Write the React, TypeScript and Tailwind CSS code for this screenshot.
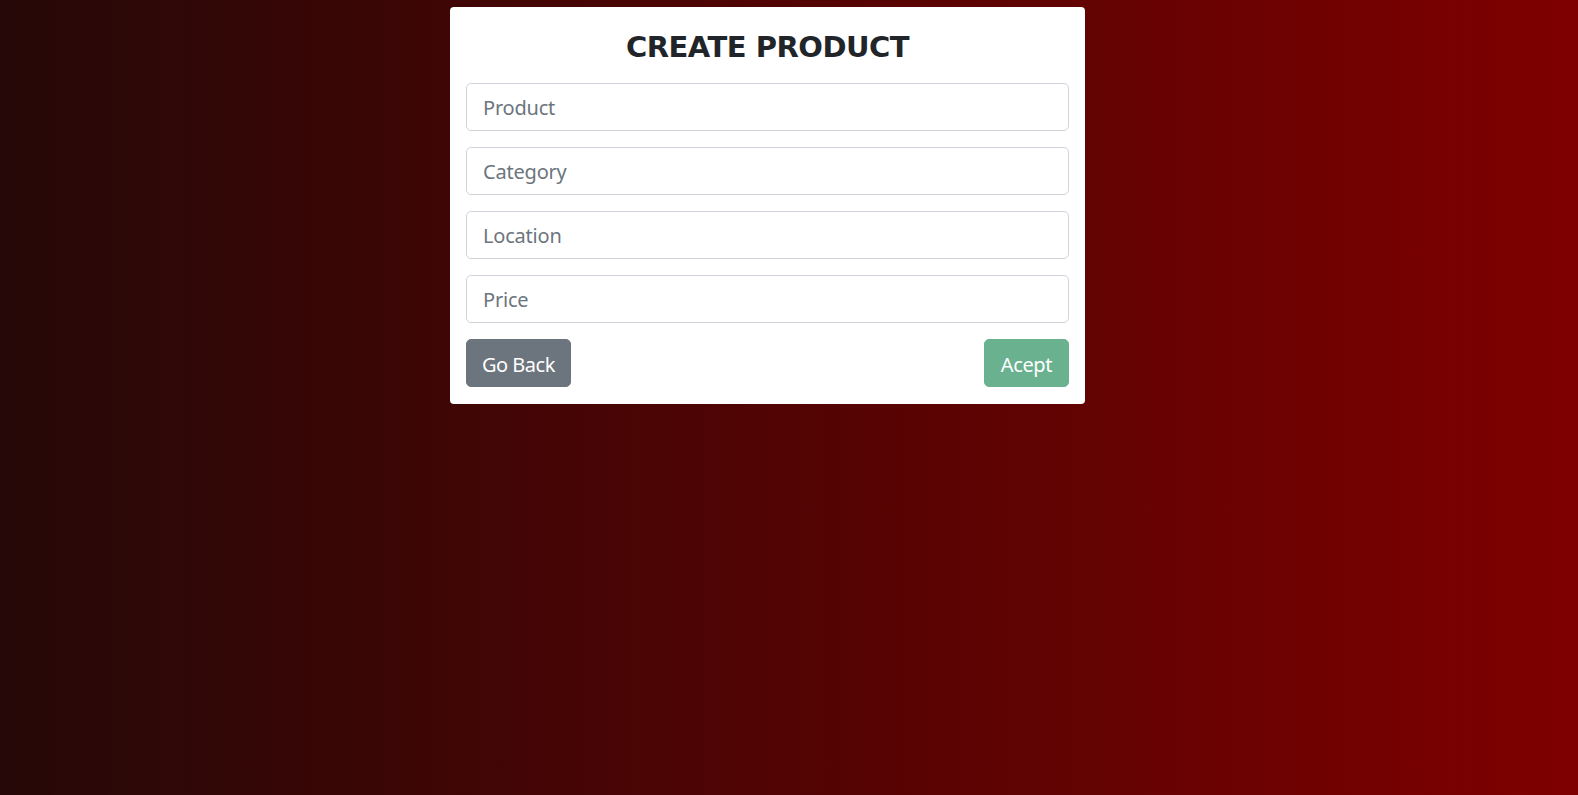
import React from "react";

const fields = ["Product", "Category", "Location", "Price"];

export default function App() {
  return (
    <div className="min-h-[795px] w-full bg-[linear-gradient(to_right,#250807,#7f0000)] pt-[7px] font-['Noto_Sans',sans-serif]">
      <div className="ml-[450px] w-[635px] rounded-[4px] bg-white px-4 pb-[17px] pt-[22px]">
        <h2 className="mb-[18px] text-center font-['DejaVu_Sans',sans-serif] text-[29px] leading-[36px] font-bold tracking-[-0.5px] text-[#212529]">
          CREATE PRODUCT
        </h2>
        <form className="flex flex-col gap-4" onSubmit={(e) => e.preventDefault()}>
          {fields.map((f) => (
            <input
              key={f}
              type="text"
              placeholder={f}
              className="h-[48px] w-full rounded-[5px] border border-[#ced4da] px-4 text-[20px] tracking-[-0.2px] text-[#212529] placeholder:text-[#6c757d] outline-none"
            />
          ))}
          <div className="flex items-center justify-between">
            <button
              type="button"
              className="h-[48px] rounded-[5px] border border-[#6c757d] bg-[#6c757d] px-[15px] pt-[3px] text-[20px] tracking-[-0.5px] text-white"
            >
              Go Back
            </button>
            <button
              type="submit"
              disabled
              className="h-[48px] rounded-[5px] border border-[#6ab190] bg-[#6ab190] px-4 pt-[3px] text-[20px] tracking-[-0.4px] text-white"
            >
              Acept
            </button>
          </div>
        </form>
      </div>
    </div>
  );
}
